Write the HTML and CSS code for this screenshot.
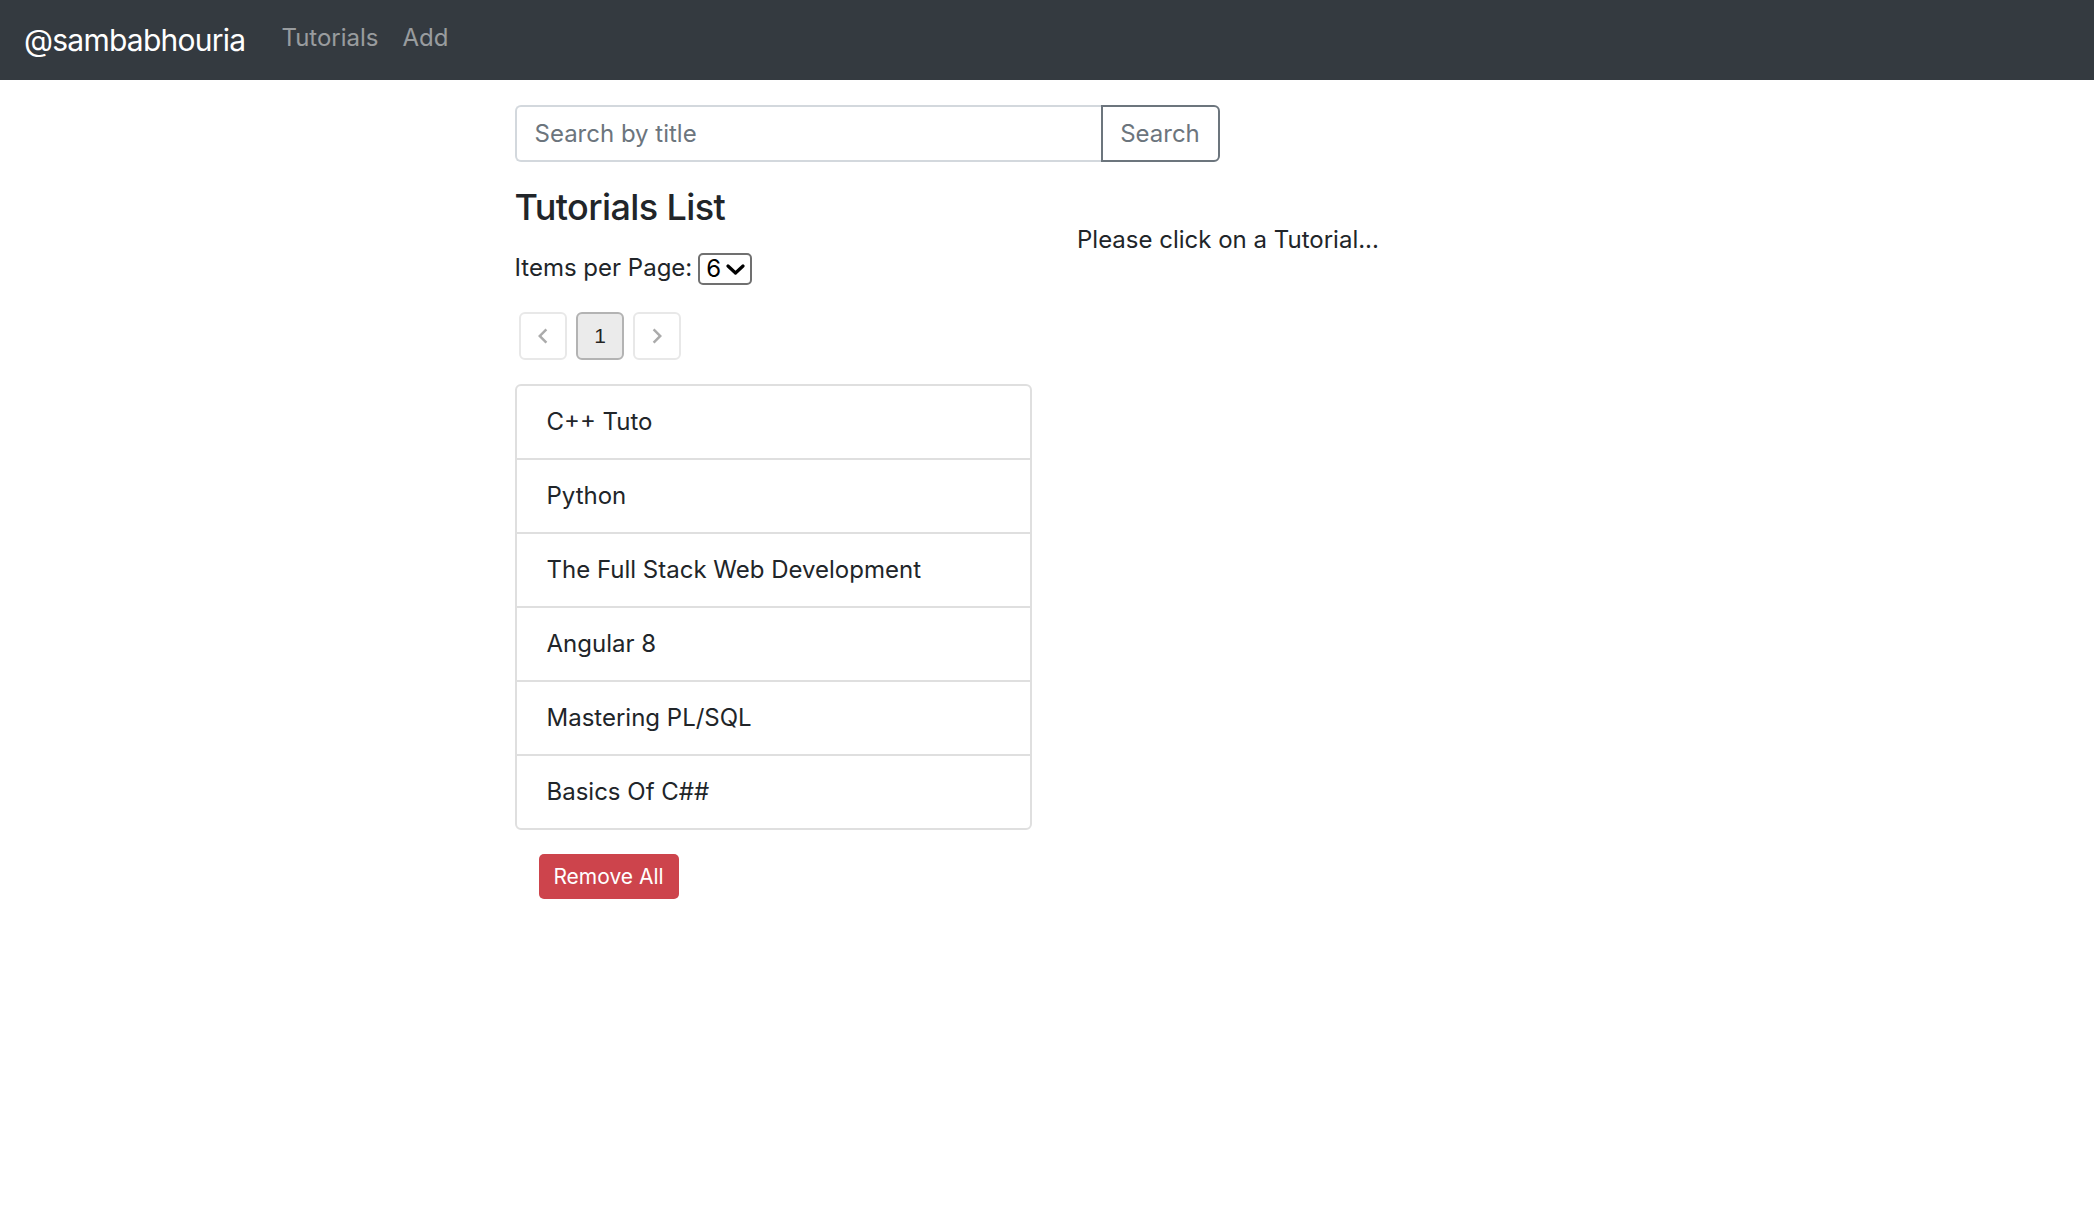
FILE: index.html
```html
<!DOCTYPE html>
<html lang="en">
<head>
<meta charset="utf-8">
<title>Tutorials</title>
<link rel="stylesheet" href="styles.css">
</head>
<body>
<nav class="navbar">
  <a class="brand" href="#">@sambabhouria</a>
  <ul class="nav">
    <li><a class="nav-link" href="#">Tutorials</a></li>
    <li><a class="nav-link" href="#">Add</a></li>
  </ul>
</nav>
<main class="list">
  <div class="col-8">
    <div class="input-group">
      <input class="search-input" type="text" placeholder="Search by title">
      <button class="search-btn" type="button">Search</button>
    </div>
  </div>
  <div class="col-6">
    <h4 class="title">Tutorials List</h4>
    <div class="per-page">
      <span>Items per Page:</span>
      <span class="select">
        <span class="select-value">6</span>
        <svg class="select-chev" width="19" height="11" viewBox="0 0 19 11"><polyline points="2,2 9.5,9 17,2" fill="none" stroke="#000" stroke-width="3.2" stroke-linecap="round" stroke-linejoin="round"/></svg>
      </span>
    </div>
    <ul class="pagination">
      <li><button class="page-item disabled" type="button"><svg width="30" height="30" viewBox="0 0 24 24"><path d="M15.41 7.41L14 6l-6 6 6 6 1.41-1.41L10.83 12z" fill="currentColor"/></svg></button></li>
      <li><button class="page-item selected" type="button">1</button></li>
      <li><button class="page-item disabled" type="button"><svg width="30" height="30" viewBox="0 0 24 24"><path d="M10 6L8.59 7.41 13.17 12l-4.58 4.59L10 18l6-6z" fill="currentColor"/></svg></button></li>
    </ul>
    <ul class="list-group">
      <li class="list-group-item">C++ Tuto</li>
      <li class="list-group-item">Python</li>
      <li class="list-group-item">The Full Stack Web Development</li>
      <li class="list-group-item">Angular 8</li>
      <li class="list-group-item">Mastering PL/SQL</li>
      <li class="list-group-item">Basics Of C##</li>
    </ul>
    <button class="btn-danger" type="button">Remove All</button>
  </div>
  <div class="col-6">
    <br>
    <p class="hint">Please click on a Tutorial...</p>
  </div>
</main>
</body>
</html>
```
FILE: styles.css
```css
* { box-sizing: border-box; }
html, body { margin: 0; padding: 0; background: #fff; }
body {
  font-family: Inter, "Noto Sans", "Liberation Sans", sans-serif;
  font-size: 24px;
  line-height: 36px;
  color: #212529;
}
a { text-decoration: none; }

.navbar {
  height: 80px;
  background: #343a40;
  display: flex;
  align-items: center;
  padding: 0 24px;
}
.brand {
  color: #fff;
  font-size: 30px;
  letter-spacing: -0.75px;
  line-height: 45px;
  margin-right: 24px;
  margin-top: 1px;
}
.nav {
  list-style: none;
  display: flex;
  margin: 0;
  padding: 0;
  margin-bottom: 4px;
}
.nav-link {
  display: block;
  padding: 0 12px;
  color: rgba(255,255,255,0.5);
  font-size: 24px;
  line-height: 36px;
}

.list {
  width: 1125px;
  margin-left: calc(50% - 555px);
  margin-top: 25px;
  display: flex;
  flex-wrap: wrap;
}
.col-8 { width: 750px; padding: 0 22.5px; }
.col-6 { width: 562.5px; padding: 0 22.5px; }

.input-group {
  display: flex;
  height: 57px;
  margin-bottom: 24px;
}
.search-input {
  flex: 1;
  min-width: 0;
  height: 57px;
  border: 2px solid #d3d8dd;
  border-right: none;
  border-radius: 6px 0 0 6px;
  padding: 0 18px;
  font: inherit;
  color: #495057;
  outline: none;
}
.search-input::placeholder { color: #6c757d; opacity: 1; }
.search-btn {
  width: 119px;
  height: 57px;
  border: 2px solid #6c757d;
  border-radius: 0 6px 6px 0;
  background: #fff;
  color: #6c757d;
  font: inherit;
  padding: 0;
}

.title {
  font-size: 36px;
  letter-spacing: -0.6px;
  line-height: 43.2px;
  font-weight: 500;
  margin: 0;
}
.per-page {
  margin-top: 21px;
  height: 36px;
  display: flex;
  align-items: center;
  gap: 6px;
}
.select {
  display: inline-flex;
  align-items: center;
  width: 54px;
  height: 32px;
  border: 2px solid #707070;
  border-radius: 5px;
  padding-left: 6px;
  margin-top: 2px;
  color: #000;
  font-size: 24px;
}
.select-value { width: 20px; }

.pagination {
  list-style: none;
  display: flex;
  margin: 26px 0 24px;
  padding: 0;
}
.page-item {
  width: 48px;
  height: 48px;
  margin: 0 4.5px;
  border-radius: 6px;
  background: #fff;
  display: flex;
  align-items: center;
  justify-content: center;
  padding: 0;
  font-family: "Liberation Sans", Arial, sans-serif;
  font-size: 21px;
  color: rgba(0,0,0,0.87);
}
.page-item.disabled {
  border: 2px solid #e8e8e8;
  color: #ababab;
}
.page-item.selected {
  border: 2px solid #b3b3b3;
  background: #ebebeb;
}

.list-group {
  list-style: none;
  margin: 0;
  padding: 0;
  border: 2px solid #dfdfdf;
  border-radius: 6px;
}
.list-group-item {
  padding: 18px 30px;
  line-height: 36px;
  border-top: 2px solid #dfdfdf;
}
.list-group-item:first-child { border-top: none; }

.btn-danger {
  margin: 24px;
  width: 140px;
  height: 45px;
  border: none;
  border-radius: 5px;
  background: #cd444c;
  color: #fff;
  font-family: inherit;
  font-size: 21px;
  padding: 0;
}

.hint { margin: 0; }
```
